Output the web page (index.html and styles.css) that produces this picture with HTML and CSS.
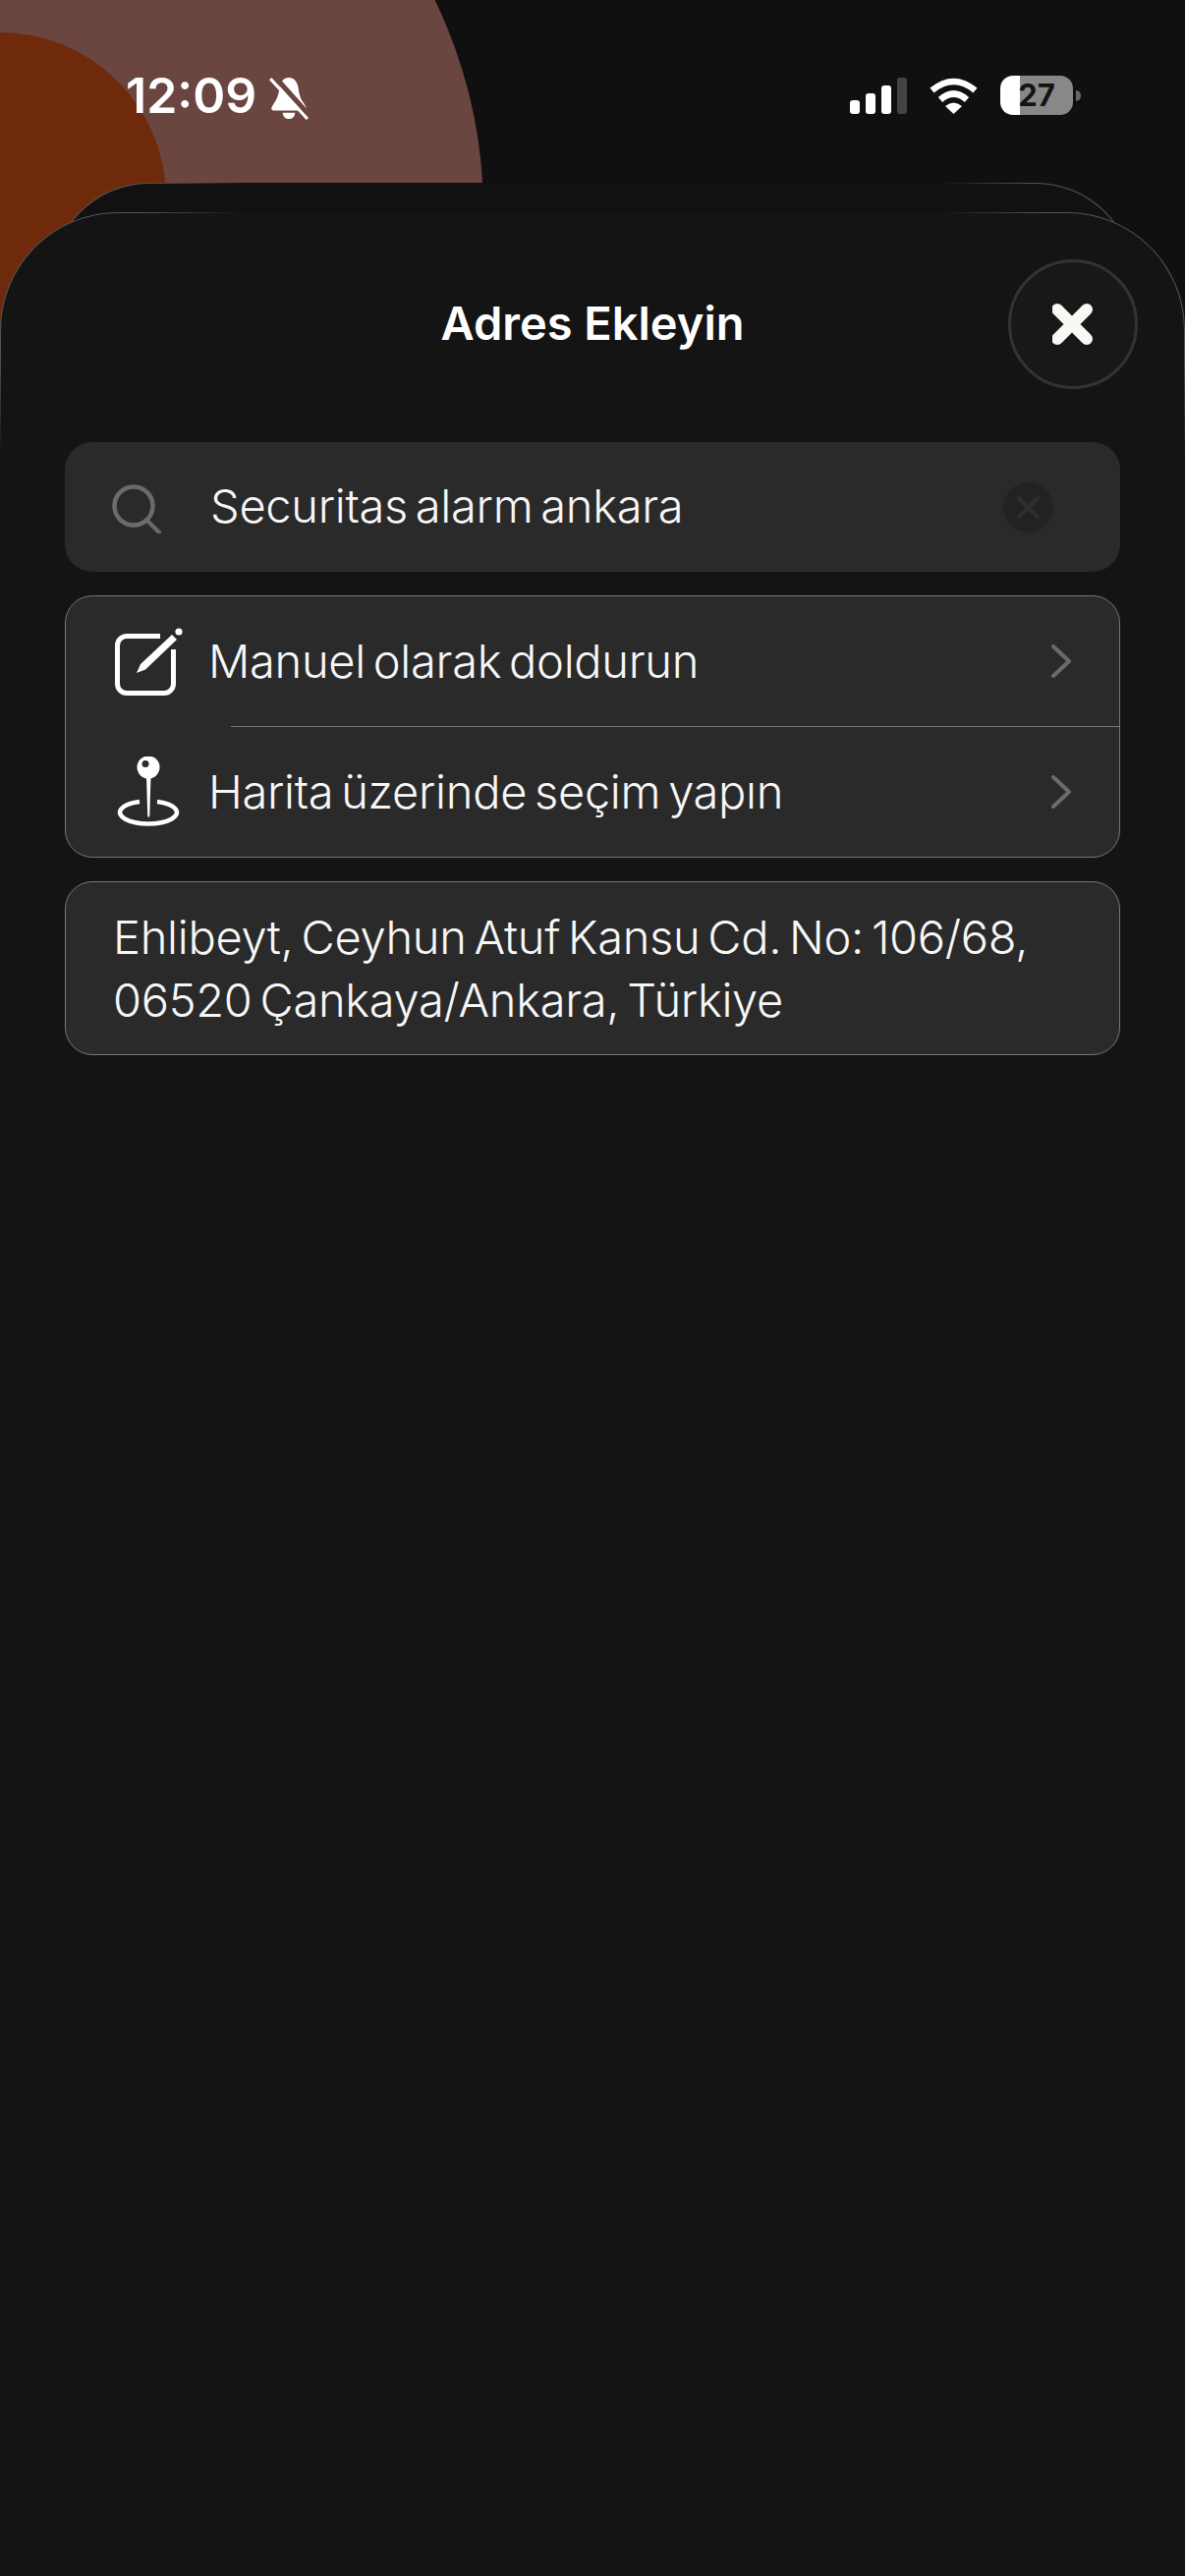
FILE: index.html
```html
<!DOCTYPE html>
<html lang="tr">
<head>
    <meta charset="UTF-8">
    <meta name="viewport" content="width=device-width, initial-scale=1.0">
    <title>Adres Ekleyin</title>
    <link rel="stylesheet" href="styles.css">
</head>
<body>
    <div class="page">
        <div class="blob blob-big"></div>
        <div class="blob blob-small"></div>

        <div class="statusbar">
            <span class="time">12:09</span>
            <svg class="bell" viewBox="0 0 40 42">
                <path d="M20 1c5 0 8 4 9 9 1 7 2 11 5 15 2 3 3 5 3 6 0 1-1 2-3 2H6c-2 0-3-1-3-2 0-1 1-3 3-6 3-4 4-8 5-15 1-5 4-9 9-9z" fill="#fff"/>
                <path d="M14 35h12c0 4-3 6-6 6s-6-2-6-6z" fill="#fff"/>
                <path d="M7 1l34 38" stroke="#6b4540" stroke-width="5"/>
                <path d="M2 2l36 39" stroke="#fff" stroke-width="3"/>
            </svg>
            <div class="status-right">
                <div class="signal">
                    <span class="bar bar1"></span>
                    <span class="bar bar2"></span>
                    <span class="bar bar3"></span>
                    <span class="bar bar4"></span>
                </div>
                <svg class="wifi" viewBox="0 0 51 37">
                    <path d="M3.5 13Q25.5-5 47.5 13" fill="none" stroke="#fff" stroke-width="6.5"/>
                    <path d="M12 22.5Q25.5 10.5 39 22.5" fill="none" stroke="#fff" stroke-width="6.5"/>
                    <path d="M25.5 37L17 29Q25.5 22 34 29Z" fill="#fff"/>
                </svg>
                <div class="battery">27</div>
                <div class="battery-nub"></div>
            </div>
        </div>

        <div class="sheet">
            <div class="sheet-header">
                <span></span>
                <h2>Adres Ekleyin</h2>
                <button class="close-btn">
                    <svg viewBox="1 0 42 42"><path d="M6 6l30 30M36 6L6 36" stroke="#f8f8f4" stroke-width="12" stroke-linecap="round"/></svg>
                </button>
            </div>

            <div class="search">
                <svg class="search-icon" viewBox="0 0 50 50">
                    <circle cx="22" cy="22" r="19.5" fill="none" stroke="#6b6b6b" stroke-width="4.5"/>
                    <path d="M35 36l13 13" stroke="#6b6b6b" stroke-width="4" stroke-linecap="round"/>
                </svg>
                <span class="search-text">Securitas alarm ankara</span>
                <svg class="clear-icon" viewBox="0 0 51 51">
                    <circle cx="25.5" cy="25.5" r="25.5" fill="#222"/>
                    <path d="M16 16l19 19M35 16L16 35" stroke="#2e2e2e" stroke-width="4" stroke-linecap="round"/>
                </svg>
            </div>

            <div class="card options">
                <div class="row">
                    <svg class="row-icon" viewBox="0 0 70 72">
                        <path d="M46 10.5H12A9.5 9.5 0 0 0 2.5 20V59A9.5 9.5 0 0 0 12 68.5H50A9.5 9.5 0 0 0 59.5 59V24" fill="none" stroke="#fff" stroke-width="5"/>
                        <path d="M22 48L26 39L58 9L63 14L31 44.5Z" fill="#fff"/>
                        <circle cx="65" cy="6" r="3.6" fill="#fff"/>
                    </svg>
                    <span class="row-text">Manuel olarak doldurun</span>
                    <svg class="chevron" viewBox="0 0 20 34"><path d="M2 2l16 15L2 32" fill="none" stroke="#6b6b6b" stroke-width="4" stroke-linecap="round" stroke-linejoin="round"/></svg>
                </div>
                <div class="divider"></div>
                <div class="row">
                    <svg class="row-icon" viewBox="0 0 70 72">
                        <path d="M25 46A29 11.5 0 1 0 43 46" fill="none" stroke="#fff" stroke-width="4.5"/>
                        <path d="M32 20H36.500L35.300 60Q34.200 64 33.200 60Z" fill="#fff"/>
                        <circle cx="34" cy="11" r="11.500" fill="#fff"/>
                        <circle cx="31" cy="7.500" r="3.500" fill="#2a2a2a"/>
                    </svg>
                    <span class="row-text">Harita üzerinde seçim yapın</span>
                    <svg class="chevron" viewBox="0 0 20 34"><path d="M2 2l16 15L2 32" fill="none" stroke="#6b6b6b" stroke-width="4" stroke-linecap="round" stroke-linejoin="round"/></svg>
                </div>
            </div>

            <div class="card address">Ehlibeyt, Ceyhun Atuf Kansu Cd. No: 106/68,<br>06520 Çankaya/Ankara, Türkiye</div>
        </div>
    </div>
</body>
</html>
```

FILE: styles.css
```css
body {
    margin: 0;
    background-color: #101010;
    font-family: 'Inter', 'Liberation Sans', sans-serif;
    color: #f7f7f7;
    overflow: hidden;
}
.page {
    position: relative;
    isolation: isolate;
    display: flex;
    flex-direction: column;
    min-height: 100vh;
    overflow: hidden;
}
.blob {
    position: absolute;
    border-radius: 50%;
    z-index: -2;
}
.blob-big {
    left: -492px;
    top: -277px;
    width: 984px;
    height: 984px;
    background: #6b4540;
}
.blob-small {
    left: -169px;
    top: 33px;
    width: 338px;
    height: 338px;
    background: #6e2a0a;
}

/* status bar */
.statusbar {
    display: flex;
    align-items: flex-start;
    box-sizing: border-box;
    height: 216px;
    padding: 71px 106px 0 128px;
}
.time {
    font-size: 50px;
    line-height: 52px;
    font-weight: 600;
    color: #fff;
}
.bell {
    width: 42px;
    height: 44px;
    margin: 7px 0 0 12px;
}
.status-right {
    display: flex;
    align-items: center;
    margin-left: auto;
    margin-top: 6px;
}
.signal {
    display: flex;
    align-items: flex-end;
    gap: 6px;
    height: 37px;
    margin-right: 22px;
}
.bar {
    width: 10px;
    border-radius: 3px;
    background: #fff;
}
.bar1 { height: 14px; }
.bar2 { height: 21px; }
.bar3 { height: 29px; }
.bar4 { height: 37px; background: #444; }
.wifi {
    width: 51px;
    height: 37px;
    margin-right: 22px;
}
.battery {
    width: 74px;
    height: 40px;
    border-radius: 13px;
    background: linear-gradient(90deg, #fff 20px, #888 20px);
    color: #141414;
    font-size: 31px;
    font-weight: 700;
    line-height: 40px;
    text-align: center;
}
.battery-nub {
    width: 5px;
    height: 11px;
    margin-left: 3px;
    border-radius: 0 6px 6px 0;
    background: #666;
}

/* sheet */
.sheet {
    position: relative;
    flex: 1;
    padding: 0 65px;
    border: 1px solid transparent;
    border-bottom: 0;
    border-radius: 120px 120px 0 0;
    background:
        linear-gradient(#141414, #141414) padding-box,
        radial-gradient(circle at 70px 70px, #555 100px, transparent 190px) border-box,
        radial-gradient(circle at calc(100% - 70px) 70px, #555 100px, transparent 190px) border-box,
        linear-gradient(#141414, #141414) border-box;
}
.sheet::before {
    content: "";
    position: absolute;
    z-index: -1;
    left: 51px;
    right: 51px;
    top: -31px;
    height: 140px;
    border: 1px solid transparent;
    border-bottom: 0;
    border-radius: 100px 100px 0 0;
    background:
        linear-gradient(#111, #111) padding-box,
        radial-gradient(circle at 60px 60px, #555 70px, transparent 150px) border-box,
        radial-gradient(circle at calc(100% - 60px) 60px, #555 70px, transparent 150px) border-box,
        linear-gradient(#111, #111) border-box;
}
.sheet-header {
    display: grid;
    grid-template-columns: 132px 1fr 132px;
    align-items: center;
    margin: 47px -18px 54px;
}
h2 {
    margin: 0;
    padding-bottom: 3px;
    font-size: 47px;
    font-weight: 600;
    text-align: center;
    color: #fff;
}
.close-btn {
    display: flex;
    align-items: center;
    justify-content: center;
    box-sizing: border-box;
    width: 132px;
    height: 132px;
    padding: 0;
    border: 3px solid #333;
    border-radius: 50%;
    background: #181818;
    box-shadow: 0 0 12px rgba(255, 255, 255, 0.02);
}
.close-btn svg {
    width: 42px;
    height: 42px;
}

/* search */
.search {
    display: flex;
    align-items: center;
    box-sizing: border-box;
    height: 132px;
    margin-bottom: 24px;
    padding: 0 68px 0 48px;
    border-radius: 28px;
    background: #2a2a2a;
}
.search-icon {
    width: 50px;
    height: 50px;
    margin: 4px 50px 0 0;
}
.search-text, .row-text, .address {
    font-size: 47px;
    font-weight: 300;
    letter-spacing: -0.3px;
    word-spacing: -5px;
    color: #f7f7f7;
}
.search-text {
    flex: 1;
    padding-bottom: 3px;
}
.row-text {
    flex: 1;
    padding-bottom: 1px;
}
.clear-icon {
    width: 51px;
    height: 51px;
}

/* cards */
.card {
    border: 1px solid #777;
    border-radius: 28px;
    background: #2a2a2a;
}
.options {
    margin-bottom: 24px;
}
.row {
    display: flex;
    align-items: center;
    height: 132px;
    padding: 0 49px 0 50px;
}
.row-icon {
    flex: none;
    width: 70px;
    height: 72px;
    margin-right: 25px;
}
.chevron {
    width: 20px;
    height: 34px;
}
.divider {
    height: 1px;
    margin-left: 168px;
    background: #777;
}
.address {
    box-sizing: border-box;
    height: 177px;
    padding: 24px 48px;
    line-height: 64px;
}
```
